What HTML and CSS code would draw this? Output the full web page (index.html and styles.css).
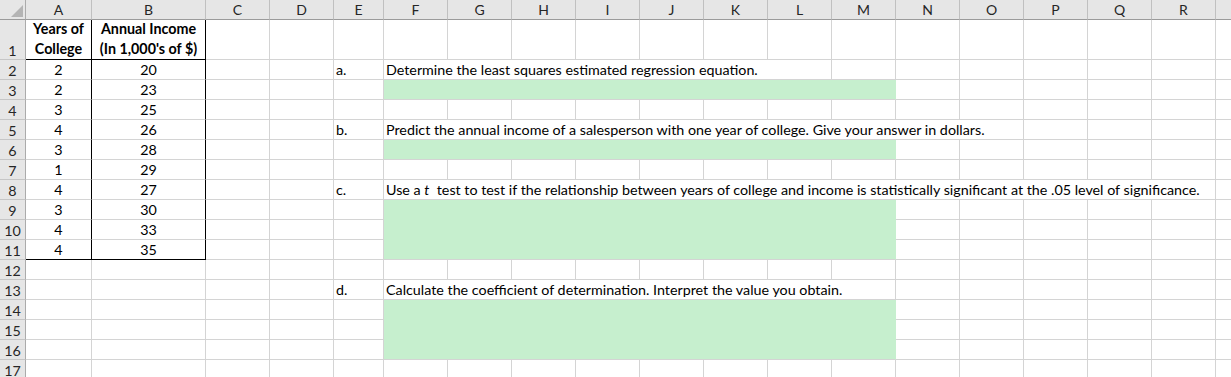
FILE: index.html
```html
<!DOCTYPE html>
<html lang="en">
<head>
  <meta charset="UTF-8">
  <meta name="viewport" content="width=device-width, initial-scale=1.0">
  <title>Regression Worksheet</title>
  <link rel="stylesheet" href="styles.css">
</head>
<body>
  <div class="sheet" id="sheet"></div>
  <script>
    // last column is only partly in view, so its letter is left off
    const letters = 'ABCDEFGHIJKLMNOPQR'.split('').concat(['']);
    const years = [2, 2, 3, 4, 3, 1, 4, 3, 4, 4];
    const income = [20, 23, 25, 26, 28, 29, 27, 30, 33, 35];
    // row -> [label, question html, how many columns the text runs over]
    const questions = {
      2: ['a.', 'Determine the least squares estimated regression equation.', 7],
      5: ['b.', 'Predict the annual income of a salesperson with one year of college. Give your answer in dollars.', 10],
      8: ['c.', 'Use a <i>t</i>&nbsp; test to test if the relationship between years of college and income is statistically significant at the .05 level of significance.', 13],
      13: ['d.', 'Calculate the coefficient of determination. Interpret the value you obtain.', 8]
    };
    // answer boxes: first row -> number of rows
    const answers = { 3: 1, 6: 1, 9: 3, 14: 3 };
    const covered = [10, 11, 15, 16];
    const sheet = document.getElementById('sheet');

    function cell(cls, html) {
      const div = document.createElement('div');
      div.className = 'cell ' + (cls || '');
      if (html !== undefined) div.innerHTML = '<span>' + html + '</span>';
      sheet.appendChild(div);
      return div;
    }

    // header row
    const corner = cell('corner');
    corner.innerHTML = '<span class="tri"></span>';
    letters.forEach(l => cell('col-head', l));

    for (let r = 1; r <= 17; r++) {
      cell('row-head', r);

      // data table A:B
      if (r === 1) {
        cell('tbl-r tbl-b center two', 'Years of<br>College');
        cell('tbl-r tbl-b center two', 'Annual Income<br>(In 1,000\'s of $)');
      } else if (r <= 11) {
        const last = r === 11 ? ' tbl-b' : '';
        cell('tbl-r center' + last, years[r - 2]);
        cell('tbl-r center' + last, income[r - 2]);
      } else {
        cell(); cell();
      }

      cell(); cell(); // C, D

      const q = questions[r];
      cell('', q ? q[0] : undefined); // E

      let next = 5; // index of F
      if (q) {
        cell('text span-' + q[2], q[1]);
        next += q[2];
      } else if (answers[r]) {
        cell('answer span-8 rows-' + answers[r]);
        next += 8;
      } else if (covered.includes(r)) {
        next += 8;
      }
      for (let c = next; c < letters.length; c++) cell();
    }
  </script>
</body>
</html>
```

FILE: styles.css
```css
body {
  margin: 0;
  background: #fff;
  font-family: Lato, 'Liberation Sans', sans-serif;
  font-size: 14.3px;
  color: #000;
  overflow: hidden;
  height: 377px;
}
.sheet {
  display: grid;
  grid-template-columns: 26px 66px 114px 64px 64px 50px repeat(14, 64px);
  grid-template-rows: 20px 40px;
  grid-auto-rows: 20px;
  width: max-content;
}
.cell {
  display: flex;
  align-items: flex-end;
  padding: 0 2px;
  line-height: 19px;
  white-space: nowrap;
  border-right: 1px solid #d4d4d4;
  border-bottom: 1px solid #d4d4d4;
  box-sizing: border-box;
  min-width: 0;
}
.corner,
.col-head,
.row-head {
  background: #e6e6e6;
  color: #262626;
}
.corner {
  justify-content: flex-end;
  padding: 0 2px 2px 0;
  border-right-color: #ababab;
  border-bottom-color: #9b9b9b;
}
.tri {
  width: 0;
  height: 0;
  border-left: 12px solid transparent;
  border-bottom: 12px solid #b4b4b4;
}
.col-head {
  justify-content: center;
  align-items: center;
  font-size: 14px;
  border-right-color: #c0c0c0;
  border-bottom-color: #9b9b9b;
}
.row-head {
  justify-content: center;
  line-height: 17px;
  border-right-color: #ababab;
  border-bottom-color: #c6c6c6;
}
.center {
  justify-content: center;
  text-align: center;
}
.two {
  font-weight: bold;
  line-height: 20px;
}
.tbl-r {
  border-right-color: #000;
}
.tbl-b {
  border-bottom-color: #000;
}
.text i {
  font-style: italic;
}
.answer {
  background: #c6efce;
  border-right-color: #c6efce;
}
.span-7 { grid-column: span 7; }
.span-8 { grid-column: span 8; }
.span-10 { grid-column: span 10; }
.span-13 { grid-column: span 13; }
.rows-1 { grid-row: span 1; }
.rows-3 { grid-row: span 3; }
```
